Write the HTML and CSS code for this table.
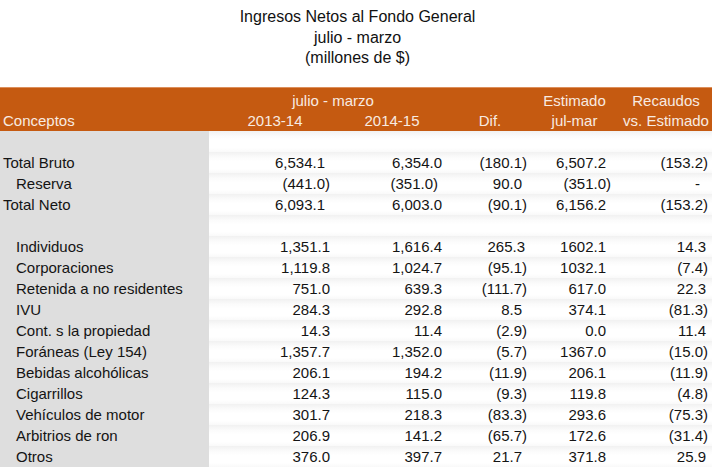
FILE: index.html
```html
<!DOCTYPE html>
<html lang="es">
<head>
<meta charset="utf-8">
<title>Ingresos Netos al Fondo General</title>
<link rel="stylesheet" href="styles.css">
</head>
<body>
<div class="title">
  <div>Ingresos Netos al Fondo General</div>
  <div>julio - marzo</div>
  <div>(millones de $)</div>
</div>
<table class="tbl">
  <colgroup>
    <col class="w-lab"><col class="w-c1"><col class="w-c2"><col class="w-c3"><col class="w-c4"><col class="w-c5">
  </colgroup>
  <thead>
    <tr class="h1">
      <th></th>
      <th colspan="2" class="span">julio - marzo</th>
      <th></th>
      <th>Estimado</th>
      <th class="rc">Recaudos</th>
    </tr>
    <tr class="h2">
      <th class="hl">Conceptos</th>
      <th>2013-14</th>
      <th>2014-15</th>
      <th>Dif.</th>
      <th>jul-mar</th>
      <th class="rc">vs. Estimado</th>
    </tr>
  </thead>
  <tbody>
    <tr><td class="lab"></td><td class="v"></td><td class="v"></td><td class="v"></td><td class="v"></td><td class="v"></td></tr>
    <tr><td class="lab">Total Bruto</td><td class="v c1 t">6,534.1</td><td class="v c2">6,354.0</td><td class="v c3">(180.1)</td><td class="v c4">6,507.2</td><td class="v c5">(153.2)</td></tr>
    <tr><td class="lab ind">Reserva</td><td class="v c1">(441.0)</td><td class="v c2 r">(351.0)</td><td class="v c3 p">90.0</td><td class="v c4 n">(351.0)</td><td class="v c5 d">-</td></tr>
    <tr><td class="lab">Total Neto</td><td class="v c1 t">6,093.1</td><td class="v c2">6,003.0</td><td class="v c3">(90.1)</td><td class="v c4">6,156.2</td><td class="v c5">(153.2)</td></tr>
    <tr><td class="lab"></td><td class="v"></td><td class="v"></td><td class="v"></td><td class="v"></td><td class="v"></td></tr>
    <tr><td class="lab ind">Individuos</td><td class="v c1">1,351.1</td><td class="v c2">1,616.4</td><td class="v c3 m">265.3</td><td class="v c4">1602.1</td><td class="v c5 p">14.3</td></tr>
    <tr><td class="lab ind">Corporaciones</td><td class="v c1">1,119.8</td><td class="v c2">1,024.7</td><td class="v c3">(95.1)</td><td class="v c4">1032.1</td><td class="v c5">(7.4)</td></tr>
    <tr><td class="lab ind">Retenida a no residentes</td><td class="v c1">751.0</td><td class="v c2">639.3</td><td class="v c3">(111.7)</td><td class="v c4">617.0</td><td class="v c5 p">22.3</td></tr>
    <tr><td class="lab ind">IVU</td><td class="v c1">284.3</td><td class="v c2">292.8</td><td class="v c3 p">8.5</td><td class="v c4">374.1</td><td class="v c5">(81.3)</td></tr>
    <tr><td class="lab ind">Cont. s la propiedad</td><td class="v c1">14.3</td><td class="v c2">11.4</td><td class="v c3">(2.9)</td><td class="v c4">0.0</td><td class="v c5 p">11.4</td></tr>
    <tr><td class="lab ind">Foráneas (Ley 154)</td><td class="v c1">1,357.7</td><td class="v c2">1,352.0</td><td class="v c3">(5.7)</td><td class="v c4">1367.0</td><td class="v c5">(15.0)</td></tr>
    <tr><td class="lab ind">Bebidas alcohólicas</td><td class="v c1">206.1</td><td class="v c2">194.2</td><td class="v c3">(11.9)</td><td class="v c4">206.1</td><td class="v c5">(11.9)</td></tr>
    <tr><td class="lab ind">Cigarrillos</td><td class="v c1">124.3</td><td class="v c2">115.0</td><td class="v c3">(9.3)</td><td class="v c4">119.8</td><td class="v c5">(4.8)</td></tr>
    <tr><td class="lab ind">Vehículos de motor</td><td class="v c1">301.7</td><td class="v c2">218.3</td><td class="v c3">(83.3)</td><td class="v c4">293.6</td><td class="v c5">(75.3)</td></tr>
    <tr><td class="lab ind">Arbitrios de ron</td><td class="v c1">206.9</td><td class="v c2">141.2</td><td class="v c3">(65.7)</td><td class="v c4">172.6</td><td class="v c5">(31.4)</td></tr>
    <tr><td class="lab ind">Otros</td><td class="v c1">376.0</td><td class="v c2">397.7</td><td class="v c3 p">21.7</td><td class="v c4">371.8</td><td class="v c5 p">25.9</td></tr>
  </tbody>
</table>
</body>
</html>
```

FILE: styles.css
```css
html, body {
  margin: 0;
  padding: 0;
  background: #ffffff;
}

body {
  font-family: "Liberation Sans", Arial, sans-serif;
  color: #141414;
  width: 715px;
  height: 469px;
  overflow: hidden;
}

.title {
  padding-top: 7px;
  height: 87px;
  box-sizing: border-box;
  text-align: center;
  font-size: 16px;
  line-height: 20.5px;
  color: #111;
}

.tbl {
  border-collapse: collapse;
  border-spacing: 0;
  table-layout: fixed;
  width: 712px;
  font-size: 15px;
}

.w-lab { width: 209px; }
.w-c1 { width: 132px; }
.w-c2 { width: 102px; }
.w-c3 { width: 94px; }
.w-c4 { width: 75px; }
.w-c5 { width: 100px; }

thead th {
  background: #c55a11;
  color: #f8ebe1;
  font-weight: normal;
  text-align: center;
  padding: 0;
  white-space: nowrap;
}

.h1 th {
  height: 22px;
  line-height: 18px;
  padding-top: 4px;
  box-sizing: border-box;
  border-top: 1px solid #dc8f5c;
  vertical-align: top;
}

.h2 th {
  height: 21px;
  line-height: 21px;
}

.h1 .span { padding-left: 14px; }
.rc { padding-left: 8px; }

.h2 .hl {
  text-align: left;
  padding-left: 3px;
}

tbody td {
  height: 21px;
  line-height: 21px;
  padding: 0;
  white-space: nowrap;
}

.lab {
  background: #dedede;
  padding-left: 3px;
  text-align: left;
}

.lab.ind { padding-left: 16px; }

.v {
  text-align: right;
  background: linear-gradient(to bottom, #f1f1f1 0, #fbfbfb 25%, #ffffff 45%, #ffffff 80%, #f9f9f9 100%);
}

tbody .c1 { padding-right: 11px; }
tbody .c1.t { padding-right: 16px; }

tbody .c2 { padding-right: 1px; }
tbody .c2.r { padding-right: 5px; }

tbody .c3 { padding-right: 10px; }
tbody .c3.p { padding-right: 15px; }
tbody .c3.m { padding-right: 12px; }

tbody .c4 { padding-right: 6px; }
tbody .c4.n { padding-right: 1px; }

tbody .c5 { padding-right: 4px; }
tbody .c5.p { padding-right: 6px; }
tbody .c5.d { padding-right: 12px; }
```
